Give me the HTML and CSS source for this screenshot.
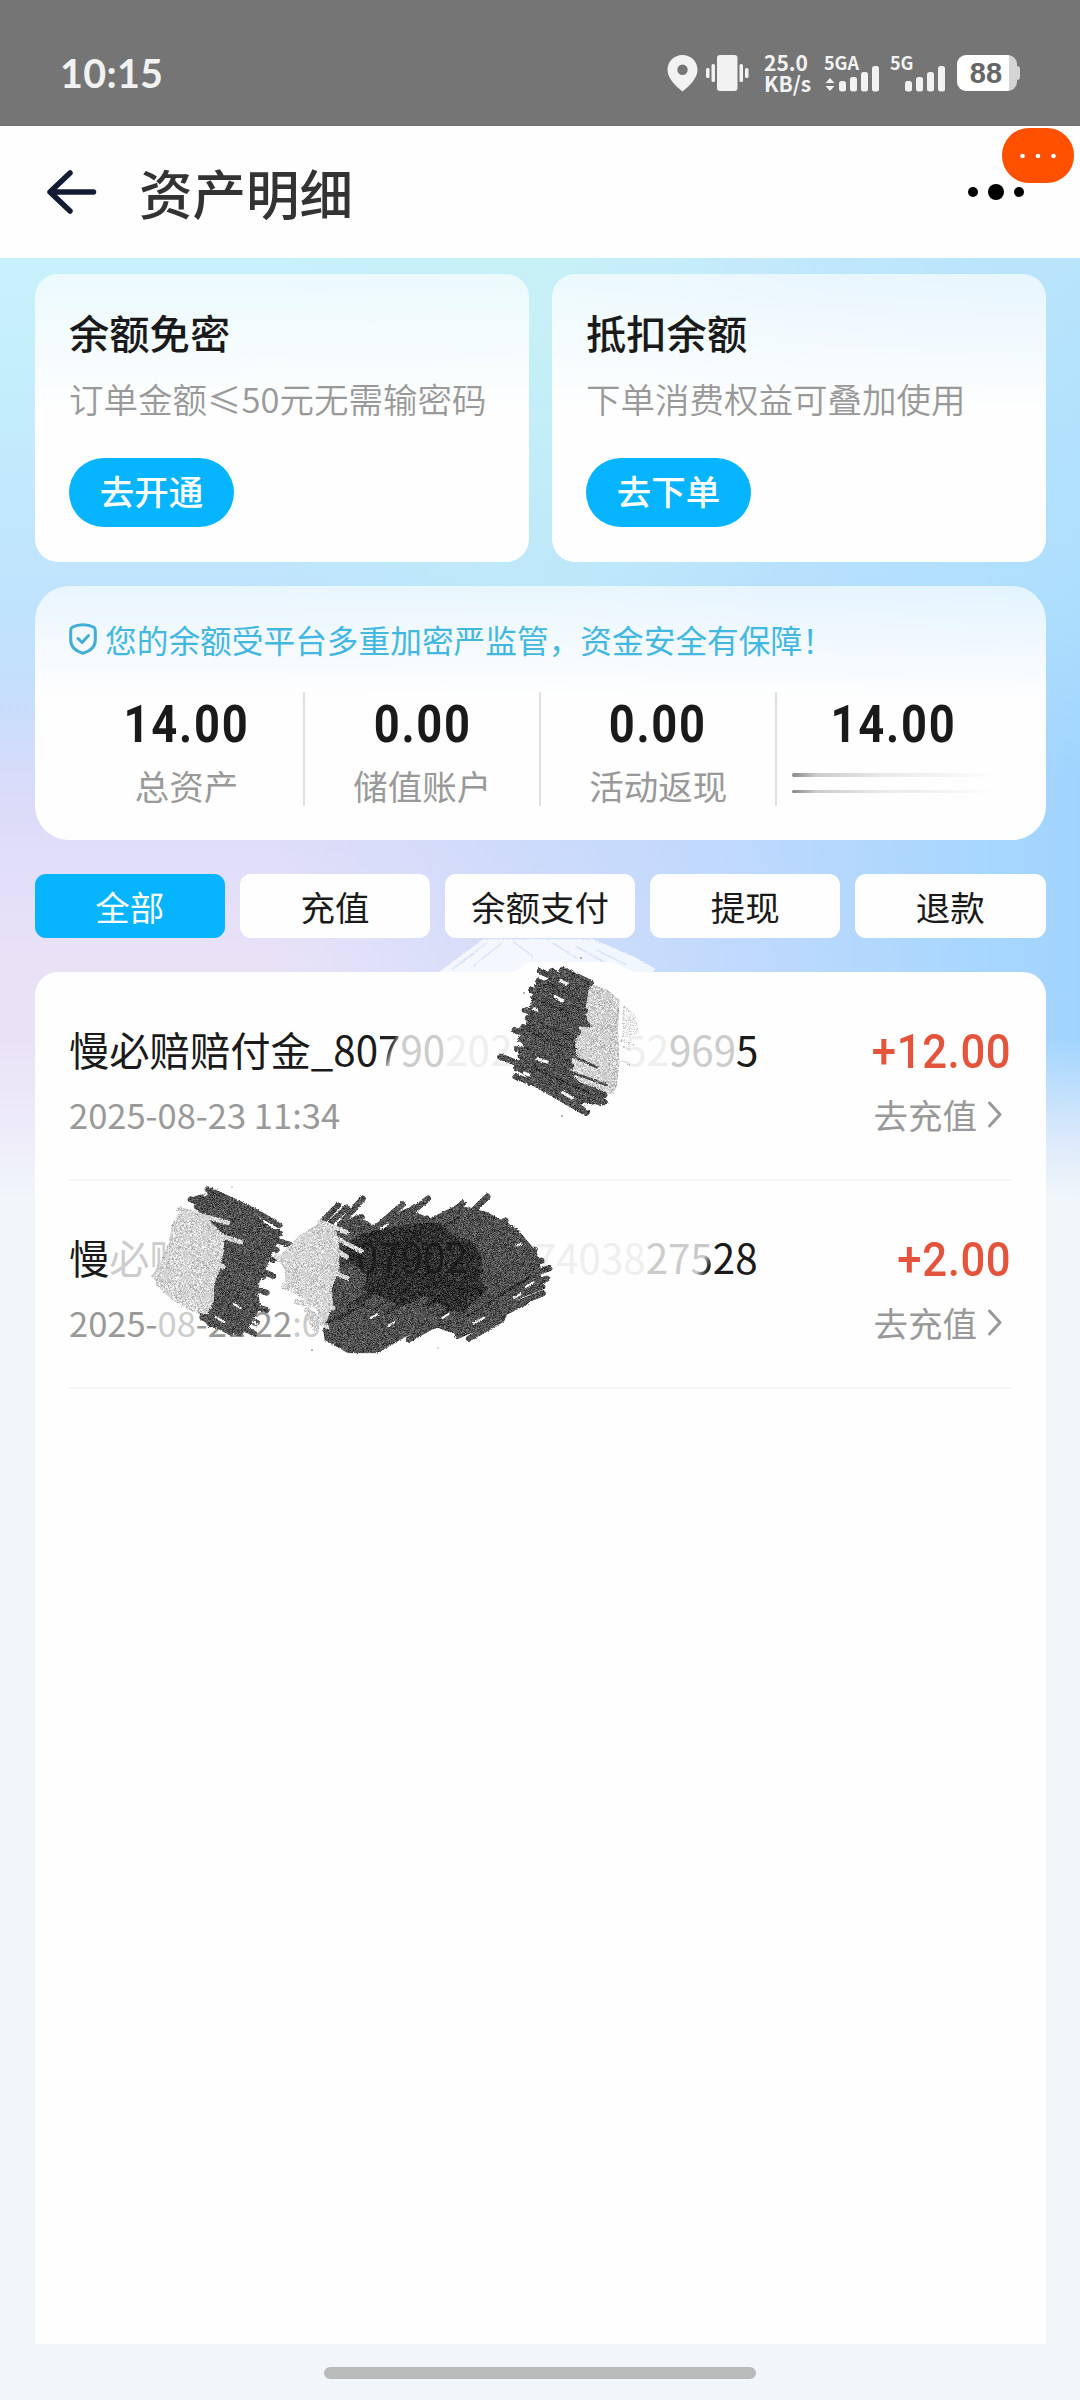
FILE: index.html
```html
<!DOCTYPE html>
<html lang="zh-CN">
<head>
<meta charset="utf-8">
<title>资产明细</title>
<link rel="stylesheet" href="styles.css">
</head>
<body>
<div class="screen">
  <div class="status">
    <span class="clock">10:15</span>
    <div class="status-icons">
      <svg class="pin" width="31" height="37" viewBox="0 0 31 37"><path fill="#f2f2f2" fill-rule="evenodd" d="M15.500 0C24 0 30.500 6.500 30.500 15c0 8-8 16-15 21.500C8.500 31 .5 23 .5 15 .5 6.500 7 0 15.500 0zm0 9.500a5.200 5.200 0 1 0 0 10.400 5.200 5.200 0 0 0 0-10.400z"/></svg>
      <svg class="vibrate" width="43" height="37" viewBox="0 0 43 37" fill="#f2f2f2"><rect x="11" y="0" width="20.500" height="36" rx="3"/><rect x="5.500" y="9" width="3.500" height="18" rx="1.500"/><rect x="0" y="13" width="3.500" height="10" rx="1.500"/><rect x="33.500" y="9" width="3.500" height="18" rx="1.500"/><rect x="39" y="13" width="3.500" height="10" rx="1.500"/></svg>
      <span class="speed"><b>25.0</b><b>KB/s</b></span>
      <span class="signal"><b>5GA</b>
        <svg width="56" height="26" viewBox="0 0 56 26" fill="#f2f2f2"><path d="M6 12l4.500 5h-9zM6 25l4.500-5h-9z"/><rect x="15" y="15" width="7" height="10.500" rx="2.500"/><rect x="26" y="11" width="7" height="14.500" rx="2.500"/><rect x="37" y="6" width="7" height="19.500" rx="2.500"/><rect x="48" y="0" width="7" height="25.500" rx="2.500"/></svg>
      </span>
      <span class="signal"><b>5G</b>
        <svg width="56" height="26" viewBox="0 0 56 26" fill="#f2f2f2"><rect x="15" y="15" width="7" height="10.500" rx="2.500"/><rect x="26" y="11" width="7" height="14.500" rx="2.500"/><rect x="37" y="6" width="7" height="19.500" rx="2.500"/><rect x="48" y="0" width="7" height="25.500" rx="2.500"/></svg>
      </span>
      <span class="battery"><b>88</b></span>
    </div>
  </div>

  <header class="nav">
    <svg width="50" height="44" viewBox="0 0 50 44" fill="none" stroke="#141c33" stroke-width="5.500" stroke-linecap="round" stroke-linejoin="round"><path d="M23 3L3 22l20 19M4 22h42.500"/></svg>
    <h1>资产明细</h1>
    <svg class="more" width="56" height="16" viewBox="0 0 56 16"><circle cx="5" cy="8" r="5"/><circle cx="28" cy="8" r="8"/><circle cx="51" cy="8" r="5"/></svg>
    <svg class="badge" width="72" height="55" viewBox="0 0 72 55"><rect width="72" height="55" rx="27" fill="#ff5000"/><g fill="#fff"><circle cx="20.500" cy="28" r="2.300"/><circle cx="36" cy="28" r="2.300"/><circle cx="51.500" cy="28" r="2.300"/></g></svg>
  </header>

  <main class="content">
    <div class="promos">
      <section class="promo"><h2>余额免密</h2><p>订单金额≤50元无需输密码</p><button>去开通</button></section>
      <section class="promo"><h2>抵扣余额</h2><p>下单消费权益可叠加使用</p><button>去下单</button></section>
    </div>

    <section class="summary">
      <div class="notice">
        <svg width="28" height="32" viewBox="0 0 28 32" fill="none" stroke="#42aed6" stroke-width="3" stroke-linecap="round" stroke-linejoin="round"><path d="M14 1.800C10.500 1.800 5.500 3 3.200 4.300Q1.700 5.200 1.700 7.500V17c0 7.500 6.500 11.500 12.300 13.200C19.800 28.500 26.300 24.500 26.300 17V7.500q0-2.300-1.500-3.200C22.500 3 17.500 1.800 14 1.800z"/><path d="M9 15.500l4 4 6.500-7"/></svg>
        <span>您的余额受平台多重加密严监管，资金安全有保障！</span>
      </div>
      <div class="stats">
        <div class="stat"><b>14.00</b><span>总资产</span></div>
        <div class="stat"><b>0.00</b><span>储值账户</span></div>
        <div class="stat"><b>0.00</b><span>活动返现</span></div>
        <div class="stat"><b>14.00</b><div class="smear"><i></i><i></i></div></div>
      </div>
    </section>

    <nav class="tabs">
      <a class="tab active">全部</a><a class="tab">充值</a><a class="tab">余额支付</a><a class="tab">提现</a><a class="tab">退款</a>
    </nav>

    <section class="list">
      <article class="row">
        <div class="line"><span class="name">慢必赔赔付金_80<span class="fade-out">7</span><span class="soft">90</span><span class="faint">202</span><span class="gap wide"></span><span class="faint">52</span><span class="soft">969</span>5</span><span class="amount">+12.00</span></div>
        <div class="line"><span class="date">2025-08-23 11:34</span><span class="go">去充值<svg width="16" height="28" viewBox="0 0 16 28"><path d="M2.500 3l10.500 11.500L2.500 26"/></svg></span></div>
      </article>
      <article class="row">
        <div class="line"><span class="name">慢<span class="soft">必赔</span><span class="gap hidden"></span><span class="faint">74038</span><span class="soft">27</span><span class="fade-in">5</span>28</span><span class="amount">+2.00</span></div>
        <div class="line"><span class="date">2025-<span class="soft">08</span>-21 22<span class="soft">:0</span></span><span class="go">去充值<svg width="16" height="28" viewBox="0 0 16 28"><path d="M2.500 3l10.500 11.500L2.500 26"/></svg></span></div>
      </article>
    </section>
  </main>

  <footer class="home"><i></i></footer>

  <svg class="scribbles" width="1080" height="480" viewBox="0 920 1080 480">
    <defs>
      <filter id="rough-edge" x="-10%" y="-10%" width="120%" height="120%" color-interpolation-filters="sRGB">
        <feTurbulence type="fractalNoise" baseFrequency="0.3" numOctaves="2" seed="5" result="rough"/>
        <feDisplacementMap in="SourceGraphic" in2="rough" scale="9" xChannelSelector="R" yChannelSelector="G"/>
      </filter>
      <filter id="charcoal" x="-10%" y="-10%" width="120%" height="120%" color-interpolation-filters="sRGB">
        <feTurbulence type="fractalNoise" baseFrequency="0.35" numOctaves="2" seed="4" result="rough"/>
        <feDisplacementMap in="SourceGraphic" in2="rough" scale="9" xChannelSelector="R" yChannelSelector="G" result="edge"/>
        <feTurbulence type="fractalNoise" baseFrequency="0.6" numOctaves="2" seed="9"/>
        <feColorMatrix values="2 0 0 0 -0.500  2 0 0 0 -0.500  2 0 0 0 -0.500  0 0 0 0 1" result="grain"/>
        <feComposite in="edge" in2="grain" operator="arithmetic" k1="0" k2="1" k3="0.420" k4="-0.180" result="mixed"/>
        <feComposite in="mixed" in2="edge" operator="in"/>
      </filter>
      <filter id="chalk" x="-10%" y="-10%" width="120%" height="120%" color-interpolation-filters="sRGB">
        <feTurbulence type="fractalNoise" baseFrequency="0.3" numOctaves="2" seed="7" result="rough"/>
        <feDisplacementMap in="SourceGraphic" in2="rough" scale="9" xChannelSelector="R" yChannelSelector="G" result="edge"/>
        <feTurbulence type="fractalNoise" baseFrequency="0.650" numOctaves="2" seed="2"/>
        <feColorMatrix values="2 0 0 0 -0.500  2 0 0 0 -0.500  2 0 0 0 -0.500  0 0 0 0 1" result="grain"/>
        <feComposite in="edge" in2="grain" operator="arithmetic" k2="1" k3="0.400" k4="-0.200" result="mixed"/>
        <feComposite in="mixed" in2="edge" operator="in"/>
      </filter>
    </defs>

    <g transform="translate(420 930) scale(.33333)" filter="url(#rough-edge)">
      <path fill="#fff" opacity=".75" d="M45 135L190 28h330l130 56 55 32-10 20z"/>
      <path fill="none" stroke="#d5e2fa" stroke-width="4" d="M120 100l80-62M160 108l85-68M280 35l60 45M400 40l70 45M470 50l90 50M530 60l90 45M95 118l70-50"/>
    </g>
    <path fill="#fefefe" d="M430 972h225v20H430zM515 972l14-10h82l24 10z"/>
    <g transform="translate(420 930) scale(.33333)" filter="url(#chalk)">
      <path fill="#d0d0d0" d="M490 155l70 24 38 30-4 90 4 100-8 70-12 25-35-12-110-50-50-60 60-160z"/>
      <path fill="#f1f1f1" d="M610 225l35 30 10 50-45 20z"/>
      <path fill="none" stroke="#f1f1f1" stroke-width="5" d="M610 350l20 10M605 390l24 14M604 330l40 16"/>
    </g>
    <g transform="translate(420 930) scale(.33333)" filter="url(#charcoal)">
      <path fill="#484848" d="M345 165l85-40 80 35-10 55-10 50-18 40-10 60-14 60 40 40 60 40-30 20-90-30-80-30-60-50 20-65 10-70z"/>
      <path fill="none" stroke="#484848" stroke-width="19" stroke-linecap="round" d="M360 123l60 30M395 124l60 30M427 120l84 38M440 132l66 32M354 154l136 54M334 180l160 63M342 207l150 56M314 240l186 43M324 264l150 43M310 292l150 38M284 301l176 56M302 327l160 48M292 357l160 51M302 377l150 56M241 380l206 76M289 414l256 86M286 439l194 76M370 475l128 73M430 505l71 41M450 455l103 40M460 475l94 42M380 440l140 68M450 500l88 16"/>
      <path fill="none" stroke="#484848" stroke-width="8" stroke-linecap="round" d="M440 370l90 42M440 270l72 18M470 235l30 40M450 425l110 40"/>
      <path fill="none" stroke="#fefefe" stroke-width="9" d="M418 150l26 13M402 198l30 16M425 485l35 22M495 525l12 14M350 385l35 12M340 235l14 5M310 428l20 8"/>
      <path stroke="#2d2d2d" stroke-width="5" fill="none" d="M330 200l120 50M320 300l130 60M360 280l90 40M330 410l180 80M380 160l100 50"/>
    </g>

    <g transform="translate(140 1170) scale(.33333)" filter="url(#charcoal)">
      <path fill="#484848" d="M160 80l50-14 120 54 60 50 20 50-20 50-20 40-20 50 15 50-20 30-30 50-110-20-40-60 20-120 20-90z"/>
      <path fill="none" stroke="#484848" stroke-width="18" stroke-linecap="round" d="M203 58l127 58 88 50M215 68l100 55M152 88l256 111M170 110l250 80M230 130l180 76M250 160l212 68M280 190l130 50M280 230l120 40M270 260l130 58M260 290l110 30M250 330l130 38M230 370l150 50M220 400l130 60M200 415l143 76M197 435l102 56M187 442l86 46"/>
      <path fill="#484848" d="M565 185l85-50 50 30 100-50 70 30 80-40 90 20 90 50 60 70 16 60-12 50-140 80-100 60-60-20-80 15-100 60-90 0-70-40-15-100z"/>
      <path fill="none" stroke="#484848" stroke-width="19" stroke-linecap="round" d="M554 148l40-42M574 156l46-43M600 165l68-79M625 180l40-38M690 190l98-87M715 185l108-73M750 180l114-94M790 190l70-44M850 210l118-110M890 200l98-78M930 190l112-110M960 190l76-52M1000 200l96-48M1010 220l88-42M1040 235l102-30M1060 255l124-16M1080 290l124-18M1070 345l158-50M1060 375l160-49M1040 415l167-66M1010 450l198-80M990 480l168-85M954 497l136-60M987 506l98-58M724 473l146-68M773 501l147-68M807 508l118-68M572 501l116-78M607 508l118-64M570 450l100-40M560 470l90-40M800 470l130-70M660 480l110-60"/>
      <path fill="#222" opacity=".85" d="M600 235l50-36 60-20 140-20 50 0 40 40 50 10 36 50-4 60 12 50-70 60-50-20-60-30-66 30-66-30-50-20 12-60-50-15z"/>
      <path fill="none" stroke="#222" stroke-opacity=".7" stroke-width="14" d="M600 290l90-70M650 400l120-80M740 430l120-80M860 410l150-100M900 440l140-90M820 190l80-30"/>
      <path fill="none" stroke="#fefefe" stroke-width="6" d="M192 78l10-8M280 402l25 14M225 440l30 18M340 455l14 8M720 178l25-16M740 470l24-14M905 445l25-16M1000 460l35-18M1155 352l28-16M1120 385l24-14M690 445l26-14M1130 228l14-8"/>
      <path stroke="#242424" stroke-width="5" fill="none" d="M620 410l170-110M700 420l200-130M850 410l180-110M980 440l190-120M800 240l160-100M560 460l120-60"/>
    </g>
    <text class="ghost" x="356" y="1273">07902</text>
    <g transform="translate(140 1170) scale(.33333)" filter="url(#chalk)">
      <path fill="#d4d4d4" d="M122 120l80 24 50 50 0 50-10 50-20 50 0 50-20 40-45-10-60-35-50-45 10-50 28-70 12-60z"/>
      <path fill="none" stroke="#d4d4d4" stroke-width="15" stroke-linecap="round" d="M118 118l145 40M180 180l122 36M150 220l95 20M150 260l100 30M120 300l100 30M100 340l110 50M50 325l140 100M100 170l100 40"/>
      <path fill="#d4d4d4" d="M545 155l45 30 10 60-4 60-20 50 4 50-20 50-20 10-10-60-50-25-45-30 0-50-20-40 60-60z"/>
      <path fill="none" stroke="#d4d4d4" stroke-width="15" stroke-linecap="round" d="M540 155l80 32M560 190l104 54M540 215l80 45M540 290l82 34M530 330l40 20M430 350l140 40M470 395l110 20M500 420l60 50M505 440l25 40M410 260l80 60"/>
    </g>
    <g fill="#555"><circle cx="581" cy="958" r=".8"/><circle cx="524" cy="993" r=".8"/><circle cx="562" cy="1116" r=".8"/><circle cx="232" cy="1187" r=".6"/><circle cx="312" cy="1350" r=".8"/><circle cx="378" cy="1348" r=".8"/><circle cx="438" cy="1348" r=".6"/></g>
  </svg>
</div>
</body>
</html>
```
FILE: styles.css
```css
* { box-sizing: border-box; margin: 0; padding: 0; }
body {
  width: 1080px;
  font-family: "Noto Sans CJK SC", "Noto Sans", sans-serif;
  color: #1a1a1a;
}
.screen { position: relative; width: 1080px; height: 2400px; display: flex; flex-direction: column; overflow: hidden; background: #f0f6fa; }

.status { flex: none; height: 126px; padding: 55px 60px 0 60px; background: #757575; display: flex; justify-content: space-between; color: #f2f2f2; }
.clock { font: 600 39.500px/36px Lato, sans-serif; font-weight: 700; margin-top: 0; letter-spacing: .3px; }
.status-icons { display: flex; height: 37px; }
.vibrate { margin-left: 8px; }
.speed { width: 46px; margin-left: 15px; display: flex; flex-direction: column; font-size: 21px; line-height: 21px; margin-top: -3px; }
.signal { position: relative; width: 56px; margin-left: 14px; display: flex; flex-direction: column; justify-content: flex-end; }
.signal + .signal { margin-left: 10px; }
.signal b { position: absolute; top: -3px; left: 0; font-size: 18px; line-height: 20px; }
.signal svg { display: block; }
.battery { position: relative; width: 60px; height: 36px; margin: 0 3px 0 11px; border-radius: 9px; background: linear-gradient(90deg, #fff 52px, #d4d4d4 52px); color: #666; font: 700 29px/36px "Liberation Sans", sans-serif; text-align: center; padding-right: 2px; }
.battery::after { content: ""; position: absolute; right: -3px; top: 11px; width: 4px; height: 14px; border-radius: 0 3px 3px 0; background: #d4d4d4; }

.nav { position: relative; flex: none; height: 132px; padding: 0 56px 0 47px; display: flex; align-items: center; background: #fefefe; }
.nav h1 { margin-left: 42px; margin-top: -1px; font-size: 53.500px; line-height: 70px; font-weight: 500; color: #333; }
.nav .more { margin-left: auto; }
.nav .badge { position: absolute; left: 1002px; top: 2px; }

.content {
  flex: none; height: 2086px; padding: 16px 34.500px 0; display: flex; flex-direction: column;
  background:
    linear-gradient(180deg, rgba(240,246,250,0) 780px, rgba(240,240,250,.75) 880px, #f0f6fa 940px),
    linear-gradient(180deg, rgba(200,238,250,.6), rgba(185,232,252,.5) 340px, rgba(170,230,252,0) 520px),
    radial-gradient(ellipse 300px 480px at 520px 60px, #c8f4f0, rgba(200,244,240,0)),
    linear-gradient(270deg, #a0d4fe 0, #a6d6fe 8%, rgba(180,215,254,.8) 30%, rgba(200,220,253,0) 75%),
    linear-gradient(180deg, #c9f6fd 0, #c5f0fd 120px, #c3e2fd 270px, #c8dbfc 420px, #dddcf8 560px, #e9e2f7 700px);
}
.promos { display: flex; gap: 23px; }
.promo { flex: 1; height: 288px; padding: 36px 34.500px 0; border-radius: 23px; background: linear-gradient(180deg, rgba(255,255,255,.65), #fefefe 48%); }
.promo h2 { font-size: 40.300px; line-height: 44px; font-weight: 500; }
.promo p { margin-top: 22px; font-size: 34.500px; line-height: 44px; color: #999; white-space: nowrap; font-weight: 350; }
.promo button { display: block; width: 165px; height: 69px; margin-top: 38px; padding-bottom: 5px; border: 0; border-radius: 35px; background: #06b4ff; color: #fff; font: 500 34.500px/64px "Noto Sans CJK SC", sans-serif; }

.summary { flex: none; height: 254px; margin-top: 24px; padding: 33px 34.500px 0; border-radius: 34px; background: linear-gradient(180deg, rgba(255,255,255,.65), #fefefe 45%); }
.notice { display: flex; align-items: center; height: 39px; gap: 8px; font-size: 31.700px; line-height: 38px; color: #42b8e0; white-space: nowrap; }
.stats { display: flex; margin-top: 34px; height: 114px; margin-left: -1.500px; }
.stat { flex: 1; display: flex; flex-direction: column; align-items: center; border-left: 2px solid #e0e0e0; }
.stat:first-child { border-left-color: transparent; }
.stat b { margin-top: 7px; font: 700 51.500px/52px Roboto, sans-serif; letter-spacing: 2px; transform: scaleX(.88); }
.stat span { margin-top: 12px; font-size: 34.500px; line-height: 44px; color: #999; }
.smear { width: 206px; margin-top: 22px; align-self: flex-start; margin-left: 15px; display: flex; flex-direction: column; gap: 13px; }
.smear i { display: block; height: 3.500px; border-radius: 2px; background: linear-gradient(90deg, #888, #ccc 12%, #e9e9e9 45%, rgba(250,250,250,0)); }

.tabs { flex: none; display: flex; gap: 14.600px; height: 64px; margin-top: 34px; }
.tab { flex: 1; border-radius: 11px; background: #fefefe; text-align: center; font-size: 34.500px; line-height: 64px; }
.tab.active { background: #06b4ff; color: #fff; }

.list { flex: none; height: 1372px; margin-top: 34px; padding: 0 34.500px; border-radius: 23px 23px 0 0; background: #fefefe; }
.row { height: 208.500px; padding-top: 48.500px; border-bottom: 2px solid #f5f5f5; }
.line { display: flex; justify-content: space-between; height: 56px; line-height: 56px; }
.line + .line { margin-top: 9px; }
.name { font-size: 40.300px; white-space: nowrap; }
.gap { display: inline-block; }
.gap.wide { width: 112px; }
.gap.hidden { width: 344px; }
.soft { color: #ccc; }
.faint { color: #efefef; }
.fade-out { background: linear-gradient(115deg, #222 50%, #c8c8c8 65%); -webkit-background-clip: text; background-clip: text; color: transparent; }
.fade-in { background: linear-gradient(115deg, #c8c8c8 55%, #222 75%); -webkit-background-clip: text; background-clip: text; color: transparent; }
.amount { font: 500 48px/62px Roboto, sans-serif; color: #e4533c; transform: scaleX(.91); transform-origin: right; letter-spacing: .7px; }
.date { font-size: 34.500px; color: #999; white-space: pre; }
.go { font-size: 34.500px; color: #999; display: flex; align-items: center; gap: 10px; padding-right: 8px; }
.go svg { fill: none; stroke: #999; stroke-width: 3; stroke-linecap: round; stroke-linejoin: round; }

.home { height: 56px; padding-top: 23px; background: #f0f6fa; }
.home i { display: block; width: 432px; height: 12px; margin: 0 auto; border-radius: 6px; background: #b9bbbb; }

.scribbles { position: absolute; left: 0; top: 920px; }
.ghost { font-size: 40.300px; fill: #161616; opacity: .7; }
```
